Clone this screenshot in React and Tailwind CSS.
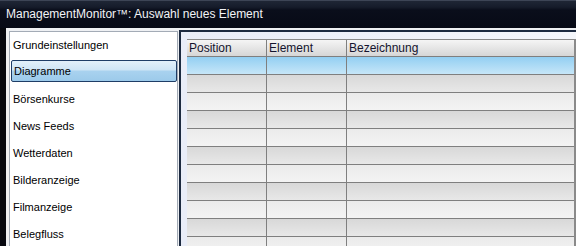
const menuItems = [
  'Grundeinstellungen',
  'Diagramme',
  'Börsenkurse',
  'News Feeds',
  'Wetterdaten',
  'Bilderanzeige',
  'Filmanzeige',
  'Belegfluss',
];

const rowCount = 11;

function MenuList({ selected }) {
  return (
    <div className="ml-[3px] mt-[2px] w-[169px] shrink-0 border border-b-0 border-[#a3abb6] bg-white">
      {menuItems.map((label, i) =>
        i === selected ? (
          <div key={label} className="h-[27px] pt-[1px]">
            <div className="ml-[1px] flex h-[22px] items-center rounded-[2px] border border-[#1f3d66] bg-[linear-gradient(#e3f0f9_0%,#cfe5f5_45%,#a9d2ef_50%,#9ccaea_100%)] pl-[2px] pt-[1px] text-[11px] text-black">
              {label}
            </div>
          </div>
        ) : (
          <div key={label} className="flex h-[27px] items-center pb-[1px] pl-[3px] text-[11px] text-black">
            {label}
          </div>
        )
      )}
    </div>
  );
}

function GridRow({ index }) {
  let bg = 'bg-[linear-gradient(#ebebeb,#f3f3f3)]';
  if (index === 0) bg = 'bg-[linear-gradient(#93cff2,#c6e6f8)]';
  else if (index % 2 === 1) bg = 'bg-[linear-gradient(#d8d8d8,#e8e8e8)]';
  return (
    <div className={`flex h-[18px] shrink-0 border-b border-[#7f7f7f] ${bg}`}>
      <div className="w-[80px] border-r border-[#7f7f7f]" />
      <div className="w-[80px] border-r border-[#7f7f7f]" />
      <div className="flex-1" />
    </div>
  );
}

function ElementGrid() {
  return (
    <div className="ml-[1px] mt-[1px] flex min-w-0 flex-1 flex-col border-l-2 border-t-2 border-[#1c2a40] bg-[linear-gradient(90deg,#e9edf8,#f4f6fb)] pl-[6px] pt-[7px]">
      <div className="flex flex-col border-r-2 border-t border-[#8a8a8a]">
        <div className="flex h-[17px] shrink-0 border-b border-[#7f7f7f] bg-[linear-gradient(#f5f5f5,#d6d6d6)] text-[12px] leading-[16px] text-[#14142e]">
          <div className="w-[80px] border-r border-[#7f7f7f] pl-[2px]">Position</div>
          <div className="w-[80px] border-r border-[#7f7f7f] pl-[2px]">Element</div>
          <div className="flex-1 pl-[2px]">Bezeichnung</div>
        </div>
        {Array.from({ length: rowCount }).map((_, i) => (
          <GridRow key={i} index={i} />
        ))}
      </div>
    </div>
  );
}

export default function App() {
  return (
    <div className="flex h-[246px] w-[576px] flex-col overflow-hidden bg-[#06080f] font-['Liberation_Sans',Arial,sans-serif]">
      <div className="flex h-[28px] shrink-0 items-center border-t border-[#3d4556] bg-[linear-gradient(#1f2635_0px,#161c2b_6px,#0a0e1b_9px,#070a16_100%)] pl-[6px] pb-[1px] text-[12px] text-[#f2f3f6]">
        ManagementMonitor™: Auswahl neues Element
      </div>
      <div className="ml-[6px] flex min-h-0 flex-1 bg-[#eef0f3] pt-px">
        <MenuList selected={1} />
        <ElementGrid />
      </div>
    </div>
  );
}
